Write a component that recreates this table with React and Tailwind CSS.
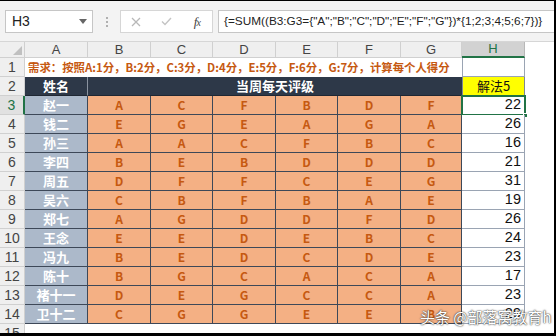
import React from "react";

const data = [
  ["赵一", "A", "C", "F", "B", "D", "F", 22],
  ["钱二", "E", "G", "E", "A", "G", "A", 26],
  ["孙三", "A", "A", "C", "F", "B", "C", 16],
  ["李四", "B", "E", "B", "D", "D", "D", 21],
  ["周五", "D", "F", "F", "C", "E", "G", 31],
  ["吴六", "C", "B", "F", "B", "A", "E", 19],
  ["郑七", "A", "G", "D", "D", "F", "D", 26],
  ["王念", "E", "E", "D", "E", "B", "C", 24],
  ["冯九", "B", "E", "D", "C", "D", "E", 23],
  ["陈十", "B", "G", "C", "A", "C", "A", 17],
  ["褚十一", "D", "E", "G", "C", "C", "A", 23],
  ["卫十二", "C", "G", "G", "E", "E", "B", 29],
];

const colW = ["w-[63px]", "w-[63px]", "w-[62px]", "w-[63px]", "w-[62px]", "w-[63px]", "w-[61px]", "w-[63px]"];
const letters = ["A", "B", "C", "D", "E", "F", "G", "H"];

const cjk = "font-['Noto_Sans_CJK_SC','Noto_Sans',sans-serif]";
const lib = "font-['Liberation_Sans','Noto_Sans_CJK_SC',sans-serif]";

function RowHead({ n, selected, h = "h-[19px]" }) {
  return (
    <div
      className={`w-[25px] shrink-0 ${h} flex items-center justify-center text-[14px] ${lib} ${
        selected
          ? "bg-[#e1e1e1] text-[#217346] border-r-2 border-r-[#217346] border-b border-b-[#d0d0d0]"
          : "bg-[#efefef] text-[#444] border-r border-b border-[#d0d0d0]"
      }`}
    >
      {n}
    </div>
  );
}

export default function App() {
  return (
    <div className={`w-[556px] h-[336px] bg-white overflow-hidden relative border-t border-r-2 border-b-[3px] border-black flex flex-col ${lib}`}>
      {/* Formula toolbar */}
      <div className="h-[41px] shrink-0 bg-[#f3f3f3] flex items-start pt-[9px] pl-[5px] border-b border-[#d6d6d6]">
        <div className="w-[88px] h-[23px] bg-white border border-[#c6c6c6] flex items-center justify-between pl-[6px] pr-[5px]">
          <span className="text-[14px] text-[#222]">H3</span>
          <svg width="8" height="5" viewBox="0 0 8 5"><path d="M0 0h8L4 5z" fill="#666" /></svg>
        </div>
        <div className="w-[27px] h-[23px] flex flex-col items-center justify-center gap-[2px]">
          <div className="w-[2px] h-[2px] bg-[#b0b0b0]" />
          <div className="w-[2px] h-[2px] bg-[#b0b0b0]" />
          <div className="w-[2px] h-[2px] bg-[#b0b0b0]" />
        </div>
        <div className="w-[93px] h-[23px] bg-white border border-[#d6d6d6] flex items-center">
          <div className="w-[31px] flex justify-center">
            <svg width="10" height="10" viewBox="0 0 10 10"><path d="M1 1L9 9M9 1L1 9" stroke="#b8b8b8" strokeWidth="1.3" /></svg>
          </div>
          <div className="w-[31px] flex justify-center">
            <svg width="11" height="9" viewBox="0 0 11 9"><path d="M1 4.5L4 7.5L10 1" stroke="#c4c4c4" strokeWidth="1.4" fill="none" /></svg>
          </div>
          <div className="w-[31px] flex justify-center">
            <span className="text-[13px] italic font-['Liberation_Serif',serif] text-[#444] tracking-[-1px]">f<span className="text-[10px]">x</span></span>
          </div>
        </div>
        <div className="ml-[5px] flex-1 h-[23px] bg-white border border-[#c6c6c6] border-r-0 flex items-center pl-[5px] overflow-hidden whitespace-nowrap">
          <span className="text-[11.8px] text-[#222]">{'{=SUM((B3:G3={"A";"B";"C";"D";"E";"F";"G"})*{1;2;3;4;5;6;7})}'}</span>
        </div>
      </div>

      {/* Column headers */}
      <div className="h-[16px] shrink-0 flex bg-white">
        <div className="w-[25px] h-full bg-[#efefef] border-r border-b border-[#d0d0d0] flex items-end justify-end p-[2px]">
          <svg width="9" height="9" viewBox="0 0 9 9"><path d="M9 0V9H0z" fill="#c0c0c0" /></svg>
        </div>
        {letters.map((l, i) => (
          <div
            key={l}
            className={`${colW[i]} h-full flex items-center justify-center text-[13px] ${
              l === "H"
                ? "bg-[#d2d2d2] text-[#217346] border-r border-r-[#b8b8b8] border-b-2 border-b-[#217346]"
                : "bg-[#efefef] text-[#444] border-r border-b border-[#d0d0d0]"
            }`}
          >
            {l}
          </div>
        ))}
        <div className="flex-1 h-full bg-white" />
      </div>

      {/* Row 1 */}
      <div className="h-[19px] shrink-0 flex">
        <RowHead n={1} />
        <div className={`w-[437px] flex items-center pl-[3px] whitespace-nowrap text-[11.4px] font-bold text-[#c65911] ${cjk}`}>
          需求：按照A:1分，B:2分，C:3分，D:4分，E:5分，F:6分，G:7分，计算每个人得分
        </div>
        <div className="w-[63px] h-full bg-white border-r border-b border-l border-[#9aa4b3]" />
        <div className="flex-1" />
      </div>

      {/* Row 2 */}
      <div className="h-[19px] shrink-0 flex">
        <RowHead n={2} />
        <div className={`w-[63px] h-full bg-[#2d3848] border-r border-r-[#8a93a0] border-b border-b-[#1f2733] flex items-center justify-center text-white font-bold text-[13px] ${cjk}`}>
          姓名
        </div>
        <div className={`w-[374px] h-full bg-[#2d3848] border-b border-b-[#1f2733] flex items-center justify-center text-white font-bold text-[13px] ${cjk}`}>
          当周每天评级
        </div>
        <div className={`w-[63px] h-full bg-[#ffff00] border-l border-r border-b border-[#7f8792] flex items-center justify-center text-[#111] text-[13px] ${cjk}`}>
          解法5
        </div>
        <div className="flex-1" />
      </div>

      {/* Data rows */}
      {data.map((row, r) => (
        <div key={r} className="h-[19px] shrink-0 flex">
          <RowHead n={r + 3} selected={r === 0} />
          <div className={`w-[63px] h-full bg-[#acb9ca] border-r border-b border-[#3d4858] flex items-center justify-center text-white font-bold text-[13px] ${cjk}`}>
            {row[0]}
          </div>
          {row.slice(1, 7).map((v, c) => (
            <div
              key={c}
              className={`${colW[c + 1]} h-full bg-[#f4b084] border-r border-b border-[#3d4858] flex items-center justify-center text-[#c65911] font-bold text-[12px] ${cjk}`}
            >
              {v}
            </div>
          ))}
          <div className="w-[63px] h-full bg-white border-r border-b border-[#9aa4b3] flex items-center justify-end pr-[3px] text-[14.5px] text-[#111] relative">
            {row[7]}
            {r === 0 && (
              <div className="absolute -left-px -top-px right-[-2px] bottom-[-2px] border-2 border-[#217346]">
                <div className="absolute right-[-4px] bottom-[-4px] w-[5px] h-[5px] bg-[#217346] border border-white" />
              </div>
            )}
          </div>
          <div className="flex-1" />
        </div>
      ))}

      {/* Row 15 */}
      <div className="h-[19px] shrink-0 flex">
        <RowHead n={15} />
        <div className="flex-1 bg-white" />
      </div>

      {/* Watermark */}
      <div className={`absolute left-[420px] top-[305px] text-[15px] text-white whitespace-nowrap [text-shadow:0_0_1px_#333,0_0_2px_#333] ${cjk}`}>
        头条 @部落窝教育h
      </div>
    </div>
  );
}
